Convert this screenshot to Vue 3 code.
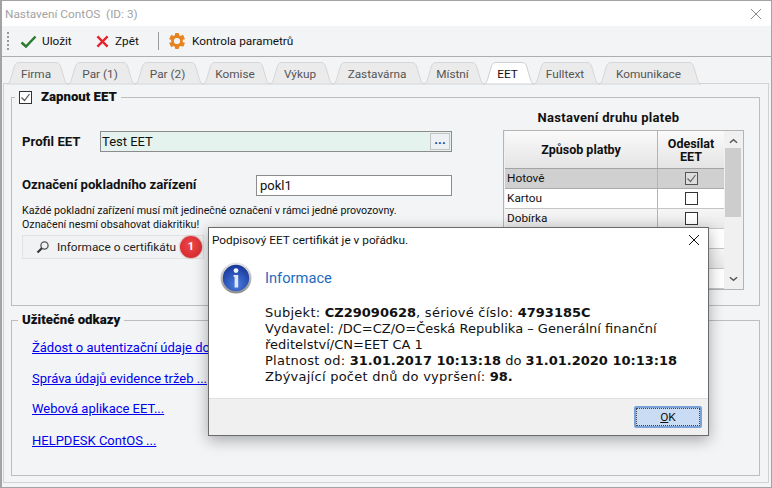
<script setup>
const tabs = [
  { name: 'Firma', w: 61 }, { name: 'Par (1)', w: 67 }, { name: 'Par (2)', w: 68 },
  { name: 'Komise', w: 67 }, { name: 'Výkup', w: 63 }, { name: 'Zastavárna', w: 91 },
  { name: 'Místní', w: 60 }, { name: 'EET', w: 50, active: true }, { name: 'Fulltext', w: 65 },
  { name: 'Komunikace', w: 102 }
]
const tabPath = (w) => `M0 23C2 23 3 20 4 17L7.5 5C8.500 2.500 10 1.500 12 1.500L${w - 12} 1.500C${w - 10} 1.500 ${w - 8.500} 2.500 ${w - 7.500} 5L${w - 4} 17C${w - 3} 20 ${w - 2} 23 ${w} 23Z`
const rows = [
  { name: 'Hotově', checked: true, sel: true }, { name: 'Kartou' }, { name: 'Dobírka' },
  { name: '' }, { name: '' }, { name: '' }
]
const links = [
  { t: 'Žádost o autentizační údaje do EET ...', gap: 'l1' },
  { t: 'Správa údajů evidence tržeb ...', gap: 'l2' },
  { t: 'Webová aplikace EET...', gap: 'l3' },
  { t: 'HELPDESK ContOS ...', gap: 'l4' }
]
</script>

<template>
  <div class="win">
    <header class="title">
      <span>Nastavení ContOS&nbsp; (ID: 3)</span>
      <svg class="close dim" viewBox="0 0 12 12" width="12" height="12"><path d="M1 1L11 11M11 1L1 11" stroke="#8a8a8a" fill="none"/></svg>
    </header>
    <div class="toolbar">
      <span class="grip"></span>
      <button class="tool t1">
        <svg viewBox="0 0 17 13" width="17" height="13"><path d="M1.500 7.500L6 11.500L15.500 1.500" stroke="#2c7a2c" stroke-width="2.500" fill="none"/></svg>
        Uložit
      </button>
      <button class="tool t2">
        <svg viewBox="0 0 14 14" width="13" height="13"><path d="M1.500 1.500L12.500 12.500M12.500 1.500L1.500 12.500" stroke="#e8202a" stroke-width="2.500" fill="none"/></svg>
        Zpět
      </button>
      <span class="sep"></span>
      <button class="tool t3">
        <svg viewBox="0 0 16 16" width="16" height="16"><path fill="#e8841f" fill-rule="evenodd" d="M6.300 0H9.700L10.200 2.300L11.700 2.900L13.700 1.700L14.300 2.300L14.300 2.300L16 6.300L13.700 6.800L13.900 8L13.700 9.200L16 9.700L14.300 13.700L12.800 13.200L11.700 13.100L10.200 13.700L9.700 16H6.300L5.800 13.700L4.300 13.100L2.300 14.300L0 9.700L2.300 9.200L2.100 8L2.300 6.800L0 6.300L2.300 1.700L4.300 2.900L5.800 2.300ZM8 4.900A3.100 3.100 0 1 0 8 11.100A3.100 3.100 0 1 0 8 4.900Z"/></svg>
        Kontrola parametrů
      </button>
    </div>
    <div class="body">
      <nav class="tabs">
        <div v-for="t in tabs" :key="t.name" class="tab" :class="{ active: t.active }" :style="{ width: t.w + 'px' }">
          <svg class="tab-bg" :viewBox="`0 0 ${t.w} 23`">
            <path :d="tabPath(t.w)"/>
          </svg>
          <span>{{ t.name }}</span>
        </div>
      </nav>
      <section class="panel">
        <fieldset class="group g1">
          <legend class="check-legend"><span class="cb on small"><svg viewBox="0 0 13 13" width="13" height="13"><path d="M2.500 6.500L5.500 9.500L10.500 3" stroke="#555" stroke-width="1.200" fill="none"/></svg></span><b>Zapnout EET</b></legend>
          <div class="cols">
            <div class="left">
              <div class="profile">
                <label>Profil EET</label>
                <div class="input green"><span>Test EET</span><span class="dots">...</span></div>
              </div>
              <div class="device">
                <label>Označení pokladního zařízení</label>
                <div class="input plain">pokl1</div>
              </div>
              <p class="note">Každé pokladní zařízení musí mít jedinečné označení v rámci jedné provozovny.<br>Označení nesmí obsahovat diakritiku!</p>
              <div class="certrow">
                <button class="cert">
                  <svg viewBox="0 0 14 14" width="14" height="14"><circle cx="8.500" cy="5.500" r="3.600" fill="none" stroke="#555" stroke-width="1.300"/><path d="M5.800 8.200L1.500 12.500" stroke="#333" stroke-width="2"/></svg>
                  Informace o certifikátu
                </button>
                <span class="badge">1</span>
              </div>
            </div>
            <div class="right">
              <h3>Nastavení druhu plateb</h3>
              <div class="table">
                <div class="tmain">
                  <div class="thead"><div class="c1">Způsob platby</div><div class="c2">Odesílat<br>EET</div></div>
                  <div v-for="(r, i) in rows" :key="i" class="row" :class="{ sel: r.sel, alt: i % 2 === 0 && !r.sel }">
                    <div class="c1">{{ r.name }}</div>
                    <div class="c2"><span v-if="i < 3" class="cb" :class="{ grayed: r.sel }"><svg v-if="r.checked" viewBox="0 0 13 13" width="13" height="13"><path d="M2.500 6.500L5.500 9.500L10.500 3" stroke="#666" stroke-width="1.200" fill="none"/></svg></span></div>
                  </div>
                </div>
                <div class="scroll">
                  <svg viewBox="0 0 10 6" width="9" height="6"><path d="M1 5L5 1.500L9 5" stroke="#555" stroke-width="1.600" fill="none"/></svg>
                  <div class="track"><div class="thumb"></div></div>
                  <svg viewBox="0 0 10 6" width="9" height="6"><path d="M1 1L5 4.500L9 1" stroke="#555" stroke-width="1.600" fill="none"/></svg>
                </div>
              </div>
            </div>
          </div>
        </fieldset>
        <fieldset class="group g2">
          <legend><b>Užitečné odkazy</b></legend>
          <div class="links">
            <a v-for="l in links" :key="l.t" href="#" class="link" :class="l.gap">{{ l.t }}</a>
          </div>
        </fieldset>
      </section>
    </div>

    <div class="dialog">
      <div class="d-title">
        <span>Podpisový EET certifikát je v pořádku.</span>
        <svg class="d-close" viewBox="0 0 12 12" width="12" height="12"><path d="M1 1L11 11M11 1L1 11" stroke="#111" fill="none"/></svg>
      </div>
      <div class="d-body">
        <svg class="d-icon" viewBox="0 0 32 32" width="32" height="32">
          <defs>
            <radialGradient id="ib" cx="50%" cy="75%" r="70%"><stop offset="0" stop-color="#4a7ce0"/><stop offset="1" stop-color="#1a3a9c"/></radialGradient>
            <linearGradient id="ir" x1="0" y1="0" x2="0" y2="1"><stop offset="0" stop-color="#e8e8e8"/><stop offset="1" stop-color="#8e8e8e"/></linearGradient>
          </defs>
          <circle cx="16" cy="16" r="15.500" fill="url(#ir)"/>
          <circle cx="16" cy="16" r="13.200" fill="url(#ib)"/>
          <circle cx="16" cy="8.600" r="2.400" fill="#eef2fb"/>
          <path d="M13.600 13H18.200V25.500H14.600V15H13.600Z" fill="#dfe6f5"/>
        </svg>
        <div class="d-text">
          <h4>Informace</h4>
          <p class="mono"><span class="sp">Subjekt: </span><b>CZ29090628</b><span class="sp">, sériové číslo: </span><b>4793185C</b><br>Vydavatel: /DC=CZ/O=Česká Republika – Generální finanční<br>ředitelství/CN=EET CA 1<br><span class="sp">Platnost od: </span><b>31.01.2017 10:13:18</b> do <b>31.01.2020 10:13:18</b><br><span class="sp">Zbývající počet dnů do vypršení: </span><b>98.</b></p>
        </div>
      </div>
      <div class="d-foot"><button class="ok"><span><u>O</u>K</span></button></div>
    </div>
  </div>
</template>

<style>
html, body { margin: 0; padding: 0; background: #f3f4f6; overflow: hidden; }
</style>

<style scoped>
* { box-sizing: border-box; }
.win {
  position: relative; width: 772px; height: 488px; overflow: hidden;
  border: 1px solid #a3a3a3; border-left-width: 2px; border-top-width: 1px;
  background: #f3f4f6; color: #111;
  font: 11.8px/16px Roboto, "Open Sans", sans-serif;
}
.title {
  height: 25px; background: #fff; color: #a2a2a2; display: flex; align-items: center;
  justify-content: space-between; padding: 0 9px 0 3px;
}
.toolbar {
  height: 31px; display: flex; align-items: center; padding-left: 5px;
  border-bottom: 1px solid #aeaeae; background: #f3f4f6;
}
.grip { width: 2px; height: 18px; background: repeating-linear-gradient(#999 0 2px, transparent 2px 4px); margin-right: 11px; }
.tool { background: none; border: 0; padding: 0; font: inherit; color: #111; display: flex; align-items: center; gap: 5px; }
.t1 { width: 76px; }
.t2 { width: 62px; gap: 6px; }
.sep { width: 1px; height: 18px; background: #9a9a9a; margin-right: 10px; }
.t3 { gap: 7px; }
.body { padding: 4px 0 0 1px; }
.tabs { display: flex; height: 23px; padding-left: 4px; position: relative; z-index: 1; margin-bottom: -1px; }
.tab { position: relative; height: 23px; display: flex; align-items: center; justify-content: center; color: #555; }
.tab span { position: relative; padding: 3px 3px 0 0; }
.tab-bg { position: absolute; left: 0; top: 0; width: 100%; height: 100%; overflow: visible; }
.tab-bg path { fill: #ebebeb; stroke: #d6d6d6; }
.tab.active { color: #111; }
.tab.active .tab-bg path { fill: #fff; stroke: #d0d0d0; }
.panel {
  width: 766px; height: 400px; border: 1px solid #d2d2d2; background: #f3f4f6;
  padding: 5px 8px 0 7px; margin-bottom: 0;
}
.group { margin: 0; border: 1px solid #bdbdbd; padding: 0; min-width: 0; width: 749px; }
.group legend { padding: 0 4px; margin-left: 3px; font: 700 13.2px/16px Roboto, sans-serif; color: #111; display: flex; align-items: center; gap: 9px; }
.g1 { height: 217px; }
.g2 { height: 164px; margin-top: 6px; }
.g2 legend { margin-left: 6px; }
.links { padding: 12px 0 0 20px; }
.cb { display: inline-block; width: 13px; height: 13px; border: 1px solid #333; background: #fff; }
.cb svg { display: block; margin: -1px; }
.cb.grayed { background: #ddd; border-color: #555; }
.cols { display: flex; }
.left { width: 480px; padding: 26px 0 0 10px; }
.profile { display: flex; align-items: center; }
label { font-weight: 700; font-size: 13.2px; }
.profile label { width: 78px; }
.input { border: 1px solid #8c8c8c; height: 21px; display: flex; align-items: center; background: #fff; padding-left: 3px; font-size: 13px; }
.green { width: 352px; background: #e4f3ee; justify-content: space-between; padding-left: 1px; }
.dots { width: 20px; height: 17px; background: #eef1f4; border: 1px solid #c4c4c4; margin-right: 1px; text-align: center; font-weight: 700; color: #1c3b8f; line-height: 12px; }
.device { display: flex; align-items: center; margin-top: 23px; }
.device label { width: 234px; margin-top: -1px; }
.plain { width: 196px; }
.note { margin: 8px 0 0; font-size: 10.7px; line-height: 14px; white-space: nowrap; }
.certrow { display: flex; align-items: center; margin-top: 3px; position: relative; }
.cert { width: 182px; height: 24px; background: #f1f2f4; border: 1px solid #e2e2e2; font: inherit; color: #222; display: flex; align-items: center; gap: 7px; padding: 0 0 0 13px; }
.badge { position: absolute; left: 158px; top: 1px; width: 22px; height: 22px; border-radius: 50%; background: radial-gradient(circle at 50% 40%, #f0484a, #cf2226); color: #fff; font-weight: 700; font-size: 11px; text-align: center; line-height: 22px; box-shadow: 0 0 2px #a66; }
.right { width: 256px; padding-left: 11px; }
.right h3 { margin: 0; font: 700 13px/16px Roboto, sans-serif; letter-spacing: .3px; text-align: center; padding: 5px 34px 4px 0; white-space: nowrap; }
.table { width: 241px; height: 160px; border: 1px solid #b4b4b4; background: #f0f0f0; display: flex; padding-left: 1px; }
.tmain { width: 219px; flex: none; }
.thead { height: 38px; display: flex; background: linear-gradient(#fafafa, #e4e4e4); border-bottom: 1px solid #a4a4a4; font-weight: 700; font-size: 12.5px; line-height: 13px; text-align: center; }
.thead div { display: flex; align-items: center; justify-content: center; }
.c1 { width: 153px; border-right: 1px solid #b4b4b4; }
.c2 { width: 66px; text-align: center; }
.row { height: 20px; display: flex; background: #fff; border-bottom: 1px solid #c4c4c4; line-height: 18px; }
.row.alt { background: linear-gradient(#f6f6f6, #e8e8e8); }
.row.sel { background: #d0d0d0; border-bottom-color: #aaa; }
.row .c1 { padding-left: 2px; }
.row .c2 { display: flex; align-items: center; justify-content: center; }
.scroll { flex: 1; display: flex; flex-direction: column; align-items: center; padding: 7px 0 7px; }
.track { flex: 1; width: 100%; padding: 4px 0 0 1px; }
.thumb { height: 69px; background: #cdcdcd; width: 16px; }
.link { display: block; color: #0000ee; width: max-content; text-decoration: underline; font-size: 13px; line-height: 16px; }
.l2 { margin-top: 15px; }
.l3 { margin-top: 14px; }
.l4 { margin-top: 16px; }
.dialog {
  position: absolute; left: 206px; top: 226px; width: 501px; height: 209px; background: #fff;
  border: 1px solid #6a6a6a; box-shadow: 0 4px 14px rgba(0,0,0,.32);
  display: flex; flex-direction: column; color: #111;
}
.d-title { height: 24px; display: flex; align-items: center; justify-content: space-between; padding: 0 8px 0 3px; flex: none; }
.d-body { flex: 1; display: flex; padding: 10px 0 0 11px; gap: 13px; }
.d-icon { flex: none; }
.d-text h4 { margin: 0; font: 400 14.7px/20px Roboto, sans-serif; color: #1d6bc0; padding-top: 6px; }
.mono { margin: 17px 0 0; font: 13px/16px "DejaVu Sans", Verdana, sans-serif; white-space: nowrap; }
.sp { letter-spacing: .25px; }
.d-foot { height: 37px; flex: none; background: #f0f0f0; border-top: 1px solid #dfdfdf; display: flex; justify-content: flex-end; align-items: center; padding-right: 6px; }
.ok { width: 68px; height: 22px; background: #c9dcf3; border: 2px solid #7aa2d8; border-radius: 2px; font: inherit; color: #111; padding: 0; outline: 1px dotted #444; outline-offset: -3px; }
.close, .d-close { flex: none; }
</style>
